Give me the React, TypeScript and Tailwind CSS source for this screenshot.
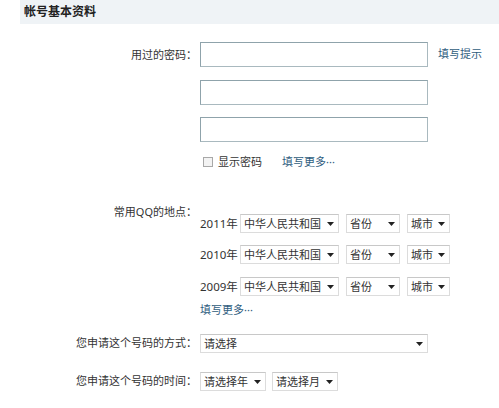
import React from "react";

const font = { fontFamily: '"Noto Sans", "Noto Sans CJK SC", sans-serif' };

function Arrow() {
  return (
    <svg width="7" height="4" viewBox="0 0 7 4" className="shrink-0">
      <path d="M0 0 H7 L3.5 4 Z" fill="#222" />
    </svg>
  );
}

function Sel({ w, text }: { w: string; text: string }) {
  return (
    <div
      className={`${w} h-[19px] flex items-center justify-between gap-[4px] pl-[3px] pr-[4px] border border-[#dcdcdc] border-t-[#c8c8c8] bg-white text-[11px] text-[#333] leading-none whitespace-nowrap shrink-0`}
    >
      <span>{text}</span>
      <Arrow />
    </div>
  );
}

function Input({ cls = "" }: { cls?: string }) {
  return (
    <div
      className={`w-[228px] h-[25px] border border-[#8fa3ab] border-b-[#a9b9bf] border-r-[#a9b9bf] bg-white ${cls}`}
    />
  );
}

function YearRow({ year, cls = "" }: { year: string; cls?: string }) {
  return (
    <div className={`flex items-center h-[19px] ${cls}`}>
      <span className="w-[40px] text-[11.5px] text-[#333] whitespace-nowrap">{year}年</span>
      <Sel w="w-[99px]" text="中华人民共和国" />
      <Sel w="w-[54px] ml-[7px]" text="省份" />
      <Sel w="w-[43px] ml-[7px]" text="城市" />
    </div>
  );
}

export default function App() {
  return (
    <div className="w-[499px] h-[408px] bg-white overflow-hidden text-[#333] text-[11px]" style={font}>
      <div className="ml-[20px] h-[24px] bg-[#eff3f6] pl-[4px] flex items-center">
        <span className="text-[12px] font-bold text-[#222]">帐号基本资料</span>
      </div>

      {/* passwords */}
      <div className="flex mt-[18px]">
        <div className="w-[200px] pr-[3px] text-right leading-[25px]">用过的密码：</div>
        <div className="flex flex-col">
          <div className="flex items-center">
            <Input />
            <span className="ml-[10px] text-[#2f5d80]">填写提示</span>
          </div>
          <Input cls="mt-[13px]" />
          <Input cls="mt-[12px]" />
          <div className="flex items-center h-[16px] mt-[12px]">
            <div className="ml-[3px] w-[10px] h-[10px] border border-[#a8a8a8] bg-[#f3f3f3]" />
            <span className="ml-[5px]">显示密码</span>
            <span className="ml-[20px] text-[#2f5d80]">填写更多···</span>
          </div>
        </div>
      </div>

      {/* locations */}
      <div className="flex mt-[34px]">
        <div className="w-[200px] pr-[3px] text-right leading-[16px]">常用QQ的地点：</div>
        <div className="flex flex-col mt-[10px]">
          <YearRow year="2011" />
          <YearRow year="2010" cls="mt-[12px]" />
          <YearRow year="2009" cls="mt-[13px]" />
          <span className="mt-[6px] leading-[16px] text-[#2f5d80]">填写更多···</span>
        </div>
      </div>

      {/* method */}
      <div className="flex items-center mt-[16px]">
        <div className="w-[200px] pr-[3px] text-right">您申请这个号码的方式：</div>
        <Sel w="w-[228px]" text="请选择" />
      </div>

      {/* time */}
      <div className="flex items-center mt-[19px]">
        <div className="w-[200px] pr-[3px] text-right">您申请这个号码的时间：</div>
        <Sel w="w-[66px]" text="请选择年" />
        <Sel w="w-[66px] ml-[6px]" text="请选择月" />
      </div>
    </div>
  );
}
